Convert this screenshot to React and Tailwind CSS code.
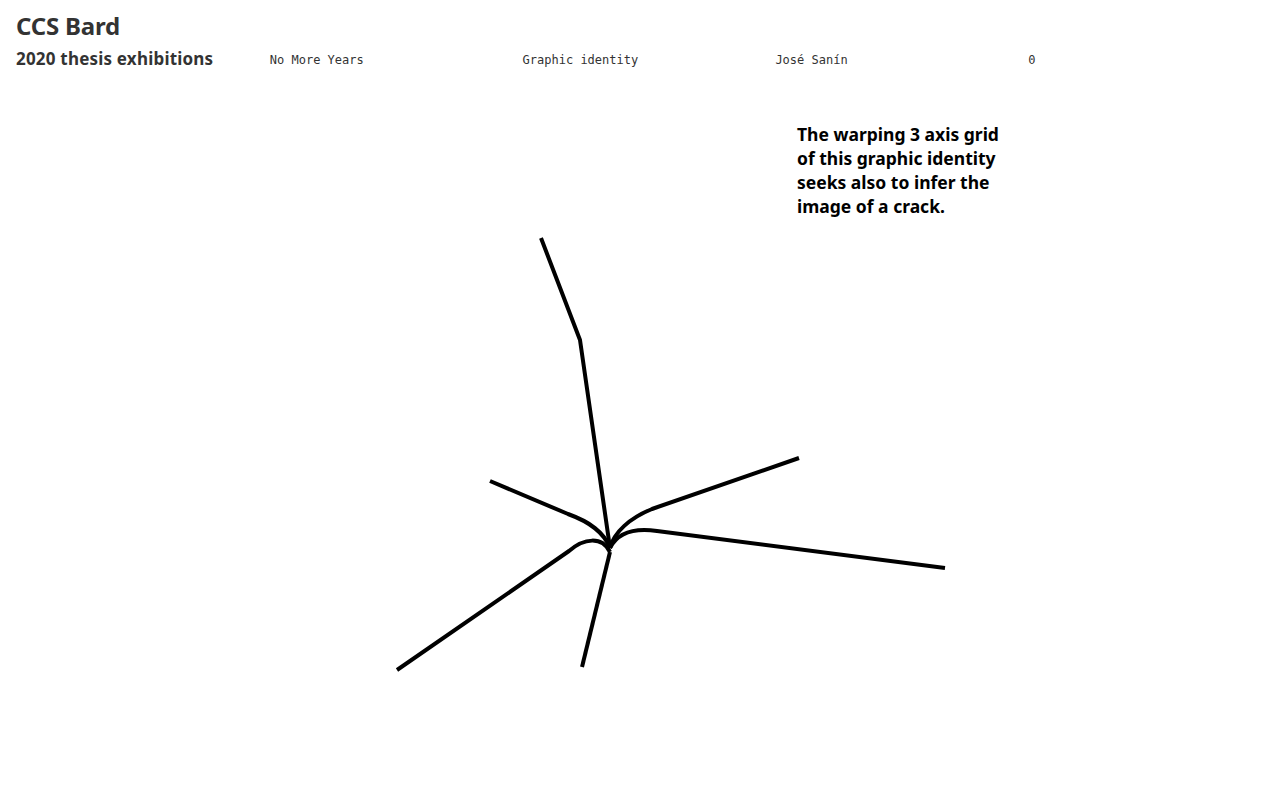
import React from 'react';

const cols = ['No More Years', 'Graphic identity', 'José Sanín', '0'];

function Crack() {
  return (
    <svg
      className="absolute left-0 top-0 pointer-events-none"
      width="1280"
      height="800"
      viewBox="0 0 1280 800"
      fill="none"
      stroke="#000"
      strokeWidth="4"
      strokeLinejoin="round"
    >
      <path d="M541 238 L580 340 L610 548" />
      <path d="M490 481 L568 514 C590 522 604 532 610 548" />
      <path d="M799 458 L652 509 C630 518 614 532 610 548" />
      <path d="M945 568 L657 531 C636 528 618 532 610 548" />
      <path d="M397 670 L569 551 C584 538 602 536 610 552" />
      <path d="M582 667 L610 552" />
    </svg>
  );
}

export default function App() {
  return (
    <div className="relative h-[800px] w-[1280px] bg-white overflow-hidden text-[#333]" style={{ fontFamily: "'Noto Sans', 'Open Sans', sans-serif" }}>
      <Crack />
      <header className="relative pl-4 pt-[10px]">
        <h1 className="text-[24px] leading-[32px] font-bold tracking-[-0.2px]">CCS Bard</h1>
        <div className="grid grid-cols-5 items-center mt-[3px]">
          <h2 className="text-[17px] leading-[26px] font-bold tracking-[0.2px]">2020 thesis exhibitions</h2>
          {cols.map((c) => (
            <span key={c} className="text-[12px] leading-[26px] pt-[2px] pl-px" style={{ fontFamily: "'DejaVu Sans Mono', 'Liberation Mono', monospace" }}>
              {c}
            </span>
          ))}
        </div>
      </header>
      <main className="relative">
        <p className="ml-[797px] mt-[49px] w-[205px] text-[17.5px] leading-[24px] font-bold text-black">
          The warping 3 axis grid of this graphic identity seeks also to infer the image of a crack.
        </p>
      </main>
    </div>
  );
}
